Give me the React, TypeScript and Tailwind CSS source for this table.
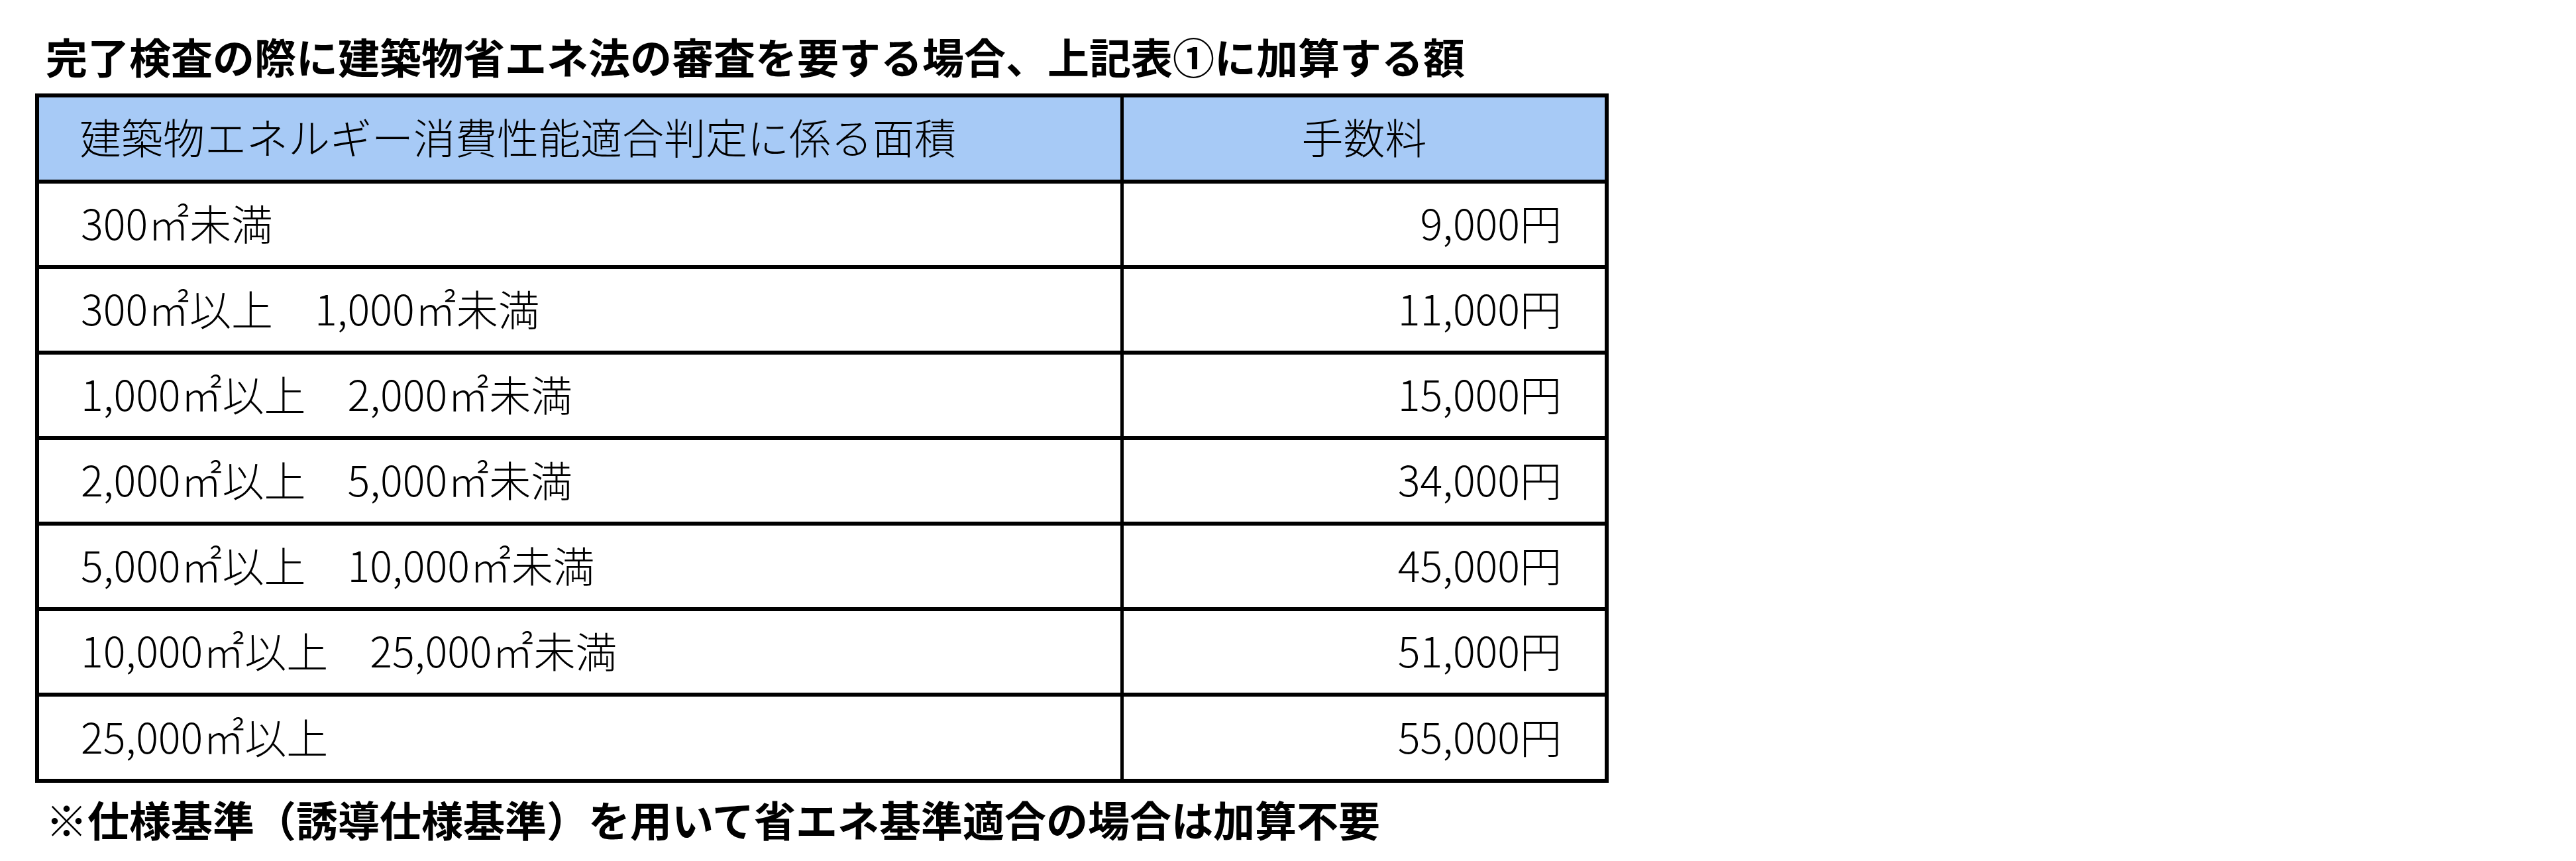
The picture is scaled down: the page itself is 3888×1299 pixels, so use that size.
import * as React from "react";

type FeeRow = {
  area: string;
  fee: string;
};

const rows: FeeRow[] = [
  { area: "300㎡未満", fee: "9,000円" },
  { area: "300㎡以上　1,000㎡未満", fee: "11,000円" },
  { area: "1,000㎡以上　2,000㎡未満", fee: "15,000円" },
  { area: "2,000㎡以上　5,000㎡未満", fee: "34,000円" },
  { area: "5,000㎡以上　10,000㎡未満", fee: "45,000円" },
  { area: "10,000㎡以上　25,000㎡未満", fee: "51,000円" },
  { area: "25,000㎡以上", fee: "55,000円" },
];

export default function App() {
  return (
    <div className="h-[1299px] w-full bg-white font-['Noto_Sans_CJK_JP',sans-serif] text-black pl-[53px] pt-[52px]">
      {/* Title */}
      <h1 className="ml-[16px] text-[63px] font-bold leading-none">
        完了検査の際に建築物省エネ法の審査を要する場合、上記表①に加算する額
      </h1>

      {/* Fee table */}
      <div className="mt-[26px] w-[2375px] border-[6px] border-black">
        <div className="grid grid-cols-[1637px_1fr] h-[130px] bg-[#a7caf6] border-b-[6px] border-black">
          <div className="flex items-center pl-[61px] pb-[7px] border-r-[5px] border-black text-[63px] font-light">
            建築物エネルギー消費性能適合判定に係る面積
          </div>
          <div className="flex items-center justify-center pb-[7px] text-[63px] font-light">
            手数料
          </div>
        </div>
        {rows.map((row, i) => {
          const last = i === rows.length - 1;
          return (
            <div
              key={row.fee}
              className={
                last
                  ? "grid grid-cols-[1637px_1fr] h-[124px]"
                  : "grid grid-cols-[1637px_1fr] h-[129px] border-b-[6px] border-black"
              }
            >
              <div className="flex items-center pl-[63px] pb-[6px] border-r-[5px] border-black text-[63px] font-light">
                {row.area}
              </div>
              <div className="flex items-center justify-end pr-[65px] pb-[6px] text-[63px] font-light">
                {row.fee}
              </div>
            </div>
          );
        })}
      </div>

      {/* Note */}
      <p className="ml-[16px] mt-[22px] text-[63px] font-bold leading-none">
        ※仕様基準（誘導仕様基準）を用いて省エネ基準適合の場合は加算不要
      </p>
    </div>
  );
}
